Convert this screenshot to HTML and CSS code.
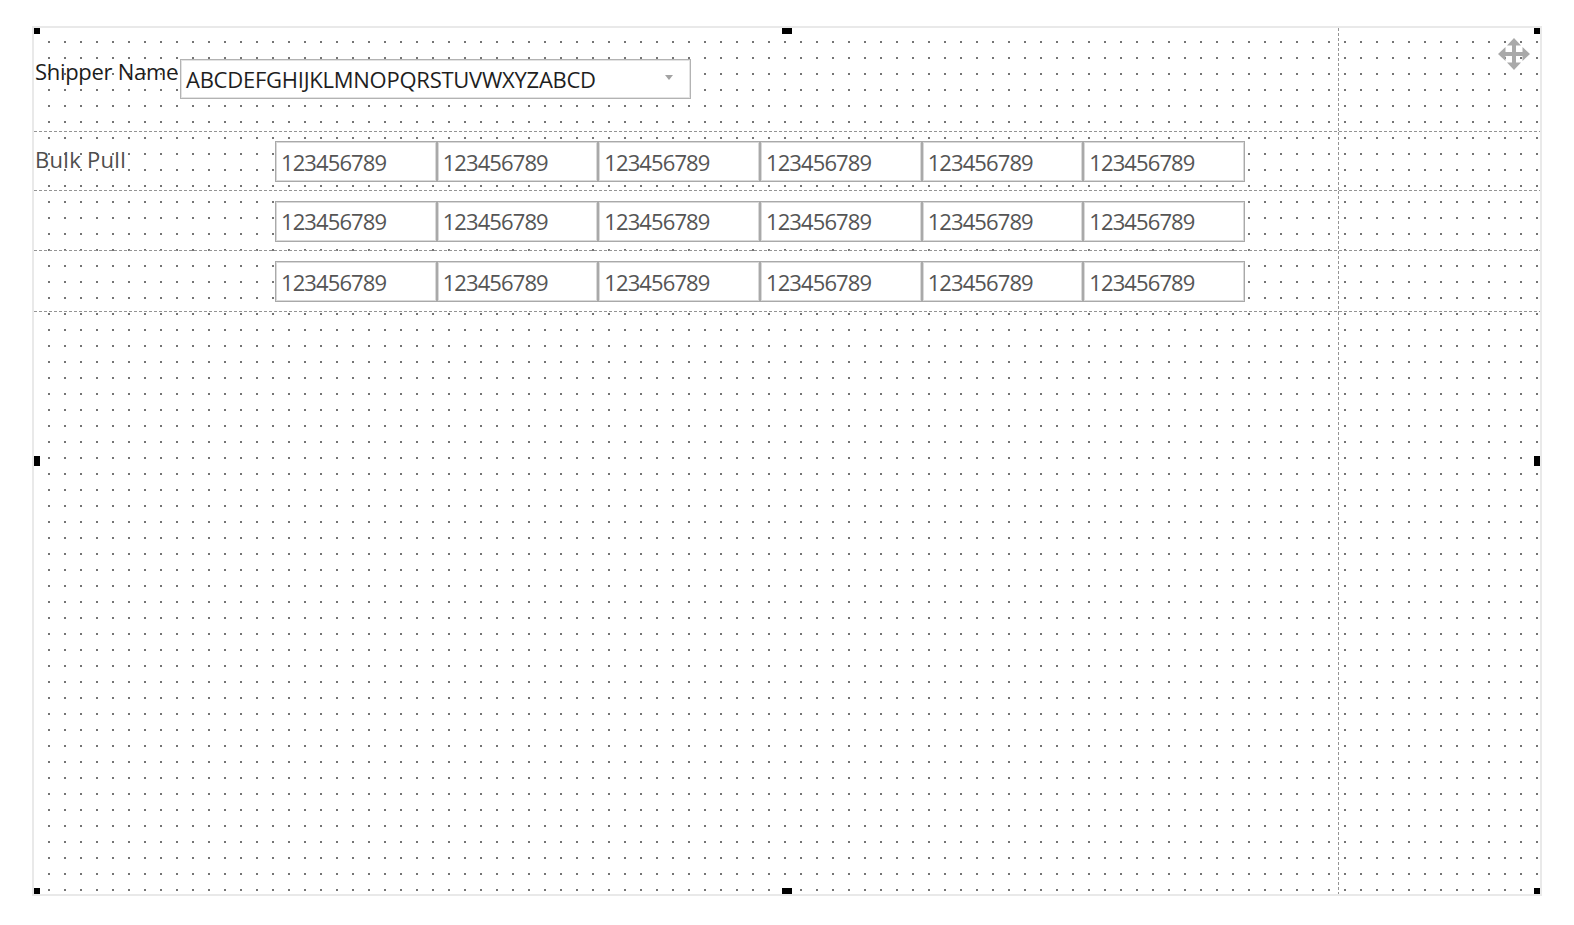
FILE: index.html
```html
<!DOCTYPE html>
<html lang="en">
<head>
<meta charset="utf-8">
<title>Designer</title>
<link rel="stylesheet" href="styles.css">
</head>
<body>
<div class="frame">
  <div class="band band-1">
    <div class="band-main band-main-top">
      <span class="label label-shipper">Shipper Name</span>
      <div class="combo">
        <span class="combo-text">ABCDEFGHIJKLMNOPQRSTUVWXYZABCD</span>
        <span class="combo-arrow"></span>
      </div>
    </div>
    <div class="band-side side-move">
      <svg class="move-icon" width="32" height="32" viewBox="0 0 32 32" aria-hidden="true">
        <path d="M16 0 L23 7.5 L18 7.5 L18 14 L24.5 14 L24.5 9 L32 16 L24.5 23 L24.5 18 L18 18 L18 24.5 L23 24.5 L16 32 L9 24.5 L14 24.5 L14 18 L7.5 18 L7.5 23 L0 16 L7.5 9 L7.5 14 L14 14 L14 7.5 L9 7.5 Z" fill="#a9a9a9"/>
      </svg>
    </div>
  </div>

  <div class="band band-2">
    <div class="band-main band-main-row">
      <div class="row-label"><span class="label label-bulk">Bulk Pull</span></div>
      <div class="cells">
        <div class="cell">123456789</div>
        <div class="cell">123456789</div>
        <div class="cell">123456789</div>
        <div class="cell">123456789</div>
        <div class="cell">123456789</div>
        <div class="cell">123456789</div>
      </div>
    </div>
    <div class="band-side"></div>
  </div>

  <div class="band band-3">
    <div class="band-main band-main-row">
      <div class="row-label"></div>
      <div class="cells">
        <div class="cell">123456789</div>
        <div class="cell">123456789</div>
        <div class="cell">123456789</div>
        <div class="cell">123456789</div>
        <div class="cell">123456789</div>
        <div class="cell">123456789</div>
      </div>
    </div>
    <div class="band-side"></div>
  </div>

  <div class="band band-4">
    <div class="band-main band-main-row">
      <div class="row-label"></div>
      <div class="cells">
        <div class="cell">123456789</div>
        <div class="cell">123456789</div>
        <div class="cell">123456789</div>
        <div class="cell">123456789</div>
        <div class="cell">123456789</div>
        <div class="cell">123456789</div>
      </div>
    </div>
    <div class="band-side"></div>
  </div>

  <div class="band band-5">
    <div class="band-main"></div>
    <div class="band-side"></div>
  </div>

  <span class="handle h-tl"></span>
  <span class="handle h-tc"></span>
  <span class="handle h-tr"></span>
  <span class="handle h-ml"></span>
  <span class="handle h-mr"></span>
  <span class="handle h-bl"></span>
  <span class="handle h-bc"></span>
  <span class="handle h-br"></span>
</div>
</body>
</html>
```

FILE: styles.css
```css
html, body {
  margin: 0;
  padding: 0;
  background: #ffffff;
}

body {
  font-family: "Open Sans", "Noto Sans", "DejaVu Sans", sans-serif;
  font-size: 22px;
  color: #333;
}

.frame {
  position: relative;
  margin: 26px 0 0 32px;
  width: 1506px;
  height: 866px;
  border: 2px solid #e9e9e9;
  display: flex;
  flex-direction: column;
  background-color: #ffffff;
  background-image: radial-gradient(circle at 8px 8px, #747474 0, #747474 0.9px, rgba(116,116,116,0) 1.4px);
  background-size: 16px 16px;
  background-position: 7px 6px;
}

.band {
  display: flex;
  flex: none;
  background-image: repeating-linear-gradient(90deg, #949494 0, #949494 3px, transparent 3px, transparent 5px);
  background-repeat: no-repeat;
  background-size: 100% 1px;
  background-position: left bottom;
}

.band-1 { height: 104px; }
.band-2 { height: 59px; }
.band-3 { height: 60px; }
.band-4 { height: 61px; }
.band-5 {
  flex: 1;
  background-image: none;
}

.band-main {
  width: 1305px;
  flex: none;
  display: flex;
  background-image: repeating-linear-gradient(180deg, #949494 0, #949494 3px, transparent 3px, transparent 5px);
  background-repeat: no-repeat;
  background-size: 1px 100%;
  background-position: right top;
}

.band-side {
  flex: 1;
}

.band-main-top {
  align-items: flex-start;
  padding-top: 28px;
  box-sizing: border-box;
}

.band-main-row {
  align-items: center;
}

.label {
  line-height: 30px;
  white-space: nowrap;
}

.label-shipper {
  flex: none;
  width: 146px;
  padding-left: 1px;
  box-sizing: border-box;
  color: #1c1c1c;
  letter-spacing: -0.3px;
}

.combo {
  flex: none;
  margin-top: 3px;
  width: 511px;
  height: 40px;
  box-sizing: border-box;
  border: 1px solid #b3b3b3;
  box-shadow: inset 0 0 0 1px #e3e3e3;
  display: flex;
  align-items: center;
  padding-left: 5px;
  padding-right: 17px;
  background: #ffffff;
}

.combo-text {
  line-height: 30px;
  color: #1e1e1e;
  letter-spacing: -0.25px;
  white-space: nowrap;
}

.combo-arrow {
  margin-left: auto;
  margin-bottom: 4px;
  width: 0;
  height: 0;
  border-left: 4.5px solid transparent;
  border-right: 4.5px solid transparent;
  border-top: 5px solid #a3a3a3;
}

.row-label {
  flex: none;
  width: 241px;
  padding-left: 1px;
  box-sizing: border-box;
  display: flex;
}

.label-bulk {
  color: #4e4e4e;
  letter-spacing: 0.3px;
  margin-bottom: 5px;
}

.cells {
  flex: none;
  width: 970px;
  display: grid;
  grid-template-columns: repeat(6, 1fr);
}

.cell {
  height: 41px;
  box-sizing: border-box;
  border: 1px solid #a9a9a9;
  box-shadow: inset 0 0 0 1px #d9d9d9;
  background: #ffffff;
  display: flex;
  align-items: center;
  padding-left: 5px;
  line-height: 30px;
  color: #555555;
  letter-spacing: -0.9px;
  white-space: nowrap;
  overflow: hidden;
}

.side-move {
  display: flex;
  justify-content: flex-end;
  align-items: flex-start;
  padding: 10px 10px 0 0;
}

.move-icon {
  display: block;
}

.handle {
  position: absolute;
  width: 6px;
  height: 6px;
  background: #000000;
}

.h-tl { left: 0; top: 0; }
.h-tc { left: 748px; top: 0; width: 10px; }
.h-tr { right: 0; top: 0; }
.h-ml { left: 0; top: 428px; height: 10px; }
.h-mr { right: 0; top: 428px; height: 10px; }
.h-bl { left: 0; bottom: 0; }
.h-bc { left: 748px; bottom: 0; width: 10px; }
.h-br { right: 0; bottom: 0; }
```
